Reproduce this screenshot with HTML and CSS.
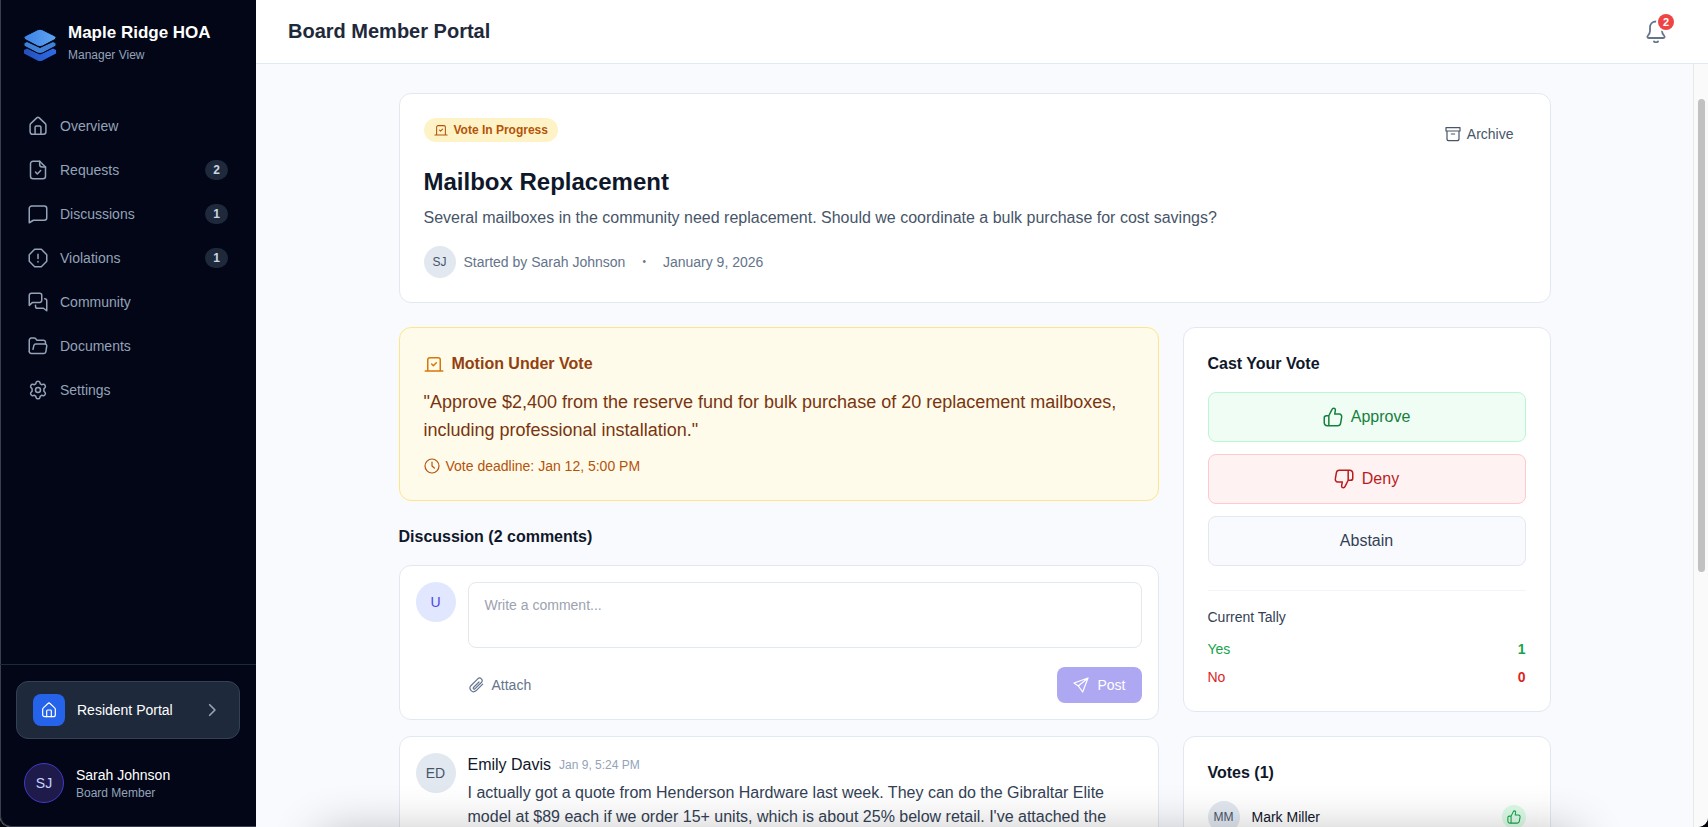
FILE: index.html
```
<!DOCTYPE html>
<html lang="en">
<head>
  <meta charset="UTF-8" />
  <meta name="viewport" content="width=device-width, initial-scale=1.0" />
  <title>Maple Ridge HOA - Board Member Portal</title>
  <link rel="stylesheet" href="styles.css">
</head>
<body>
  <!-- shared icons -->
  <svg class="sprite" aria-hidden="true">
    <symbol id="i-home" viewBox="0 0 24 24"><path d="M2.5 11a3 3 0 0 1 1-2.200L10.500 2.200a2.200 2.200 0 0 1 3 0L20.500 8.800a3 3 0 0 1 1 2.200V19a3 3 0 0 1-3 3h-13a3 3 0 0 1-3-3z"/><path d="M8.500 22v-8.500a1.500 1.500 0 0 1 1.500-1.500h4a1.500 1.500 0 0 1 1.500 1.500V22"/></symbol>
    <symbol id="i-request" viewBox="0 0 24 24"><path d="M14 1.500H6a3 3 0 0 0-3 3v15a3 3 0 0 0 3 3h12a3 3 0 0 0 3-3v-11z"/><path d="M14 1.500v4a3 3 0 0 0 3 3h4M9 14.500l2.200 2.200 4-4"/></symbol>
    <symbol id="i-chat" viewBox="0 0 24 24"><path d="M1.500 22.500V5.500a3 3 0 0 1 3-3h15a3 3 0 0 1 3 3v11a3 3 0 0 1-3 3h-13z"/></symbol>
    <symbol id="i-alert" viewBox="0 0 24 24"><path d="M8 1.500h8l6.500 6.500v8l-6.500 6.500h-8l-6.500-6.500v-8z"/><path d="M12 7.500v5M12 16.200v.5"/></symbol>
    <symbol id="i-community" viewBox="0 0 24 24"><path d="M1.500 16V4a2.500 2.500 0 0 1 2.500-2.500h10A2.500 2.500 0 0 1 16.500 4v6a2.500 2.500 0 0 1-2.500 2.500H5.500z"/><path d="M9 16v1a2.500 2.500 0 0 0 2.500 2.500h7l4 3V10.500A2.500 2.500 0 0 0 20 8"/></symbol>
    <symbol id="i-folder" viewBox="0 0 24 24"><path d="M1.500 18.500V5a2.500 2.500 0 0 1 2.500-2.500h3.500c.8 0 1.500.4 2 1l1 1.500h8A2.500 2.500 0 0 1 21 7.500V9"/><path d="M1.500 18.500A2.500 2.500 0 0 0 4 21h15a2.500 2.500 0 0 0 2.500-2.200l1-7A2.200 2.200 0 0 0 20.300 9.500H9.500A2.500 2.500 0 0 0 7 11.500l-1 4.500"/></symbol>
    <symbol id="i-gear" viewBox="0 0 24 24"><path d="M9.800 2.800c.5-1.700 3.900-1.700 4.400 0l.6 1.900 1.500.9 2-.5c1.700-.4 3.400 2.500 2.200 3.800L19.100 10.500v3l1.400 1.600c1.200 1.300-.5 4.200-2.200 3.800l-2-.5-1.500.9-.6 1.900c-.5 1.700-3.900 1.700-4.400 0l-.6-1.900-1.500-.9-2 .5c-1.700.4-3.400-2.500-2.200-3.800l1.400-1.600v-3L3.500 8.900C2.300 7.600 4 4.700 5.700 5.100l2 .5 1.500-.9z"/><circle cx="12" cy="12" r="3"/></symbol>
    <symbol id="i-bell" viewBox="0 0 24 24"><path d="M12 2.500c-3.500 0-6 2.500-6 6v3.500c0 2-.7 3-2 4.500-1.200 1.300-.6 2.500.7 2.500h14.600c1.300 0 1.900-1.200.7-2.500-1.300-1.500-2-2.500-2-4.500V8.500c0-3.500-2.500-6-6-6z"/><path d="M10 22.500c1 1 3 1 4 0"/></symbol>
    <symbol id="i-archive" viewBox="0 0 24 24"><path d="M1.500 2.500h21v5h-21zM3 7.500v11.500a3 3 0 0 0 3 3h12a3 3 0 0 0 3-3V7.500M9.500 12h5"/></symbol>
    <symbol id="i-ballot" viewBox="0 0 24 24"><path d="M1.500 20.500h21M4.500 20.500V7a2.500 2.500 0 0 1 2.500-2.500h10A2.500 2.500 0 0 1 19.500 7v13.500M9.200 12l2 2 3.600-3.600"/></symbol>
    <symbol id="i-clock" viewBox="0 0 24 24"><circle cx="12" cy="12" r="10.500"/><path d="M12 6v6l3.500 3"/></symbol>
    <symbol id="i-up" viewBox="0 0 24 24"><path d="M7 10.500L10.500 3.500c.5-1.100 1.200-2 2.300-2 1.600 0 2.300 1.300 2 2.800l-.8 4.200h5.500a3 3 0 0 1 2.900 3.600l-1.300 7.500a3.500 3.500 0 0 1-3.400 2.900H5a3.500 3.500 0 0 1-3.500-3.500v-6A2.500 2.500 0 0 1 4 10.500zM7 10.500v12"/></symbol>
    <symbol id="i-clip" viewBox="0 0 24 24"><path d="M16.500 7.500l-8.300 8.300a1.500 1.500 0 0 0 2.100 2.100l9.700-9.700a3.800 3.800 0 0 0-5.400-5.400L4.300 13.100a5.400 5.400 0 0 0 7.600 7.600L22 10.600"/></symbol>
    <symbol id="i-send" viewBox="0 0 24 24"><path d="M22.500 1.500L1.500 9l6.500 4.500L14.500 22.500zM22.500 1.500L8 13.500"/></symbol>
    <symbol id="i-next" viewBox="0 0 24 24"><path d="M8 3l9 9-9 9"/></symbol>
  </svg>

  <div class="app">
    <aside class="sidebar">
      <div class="brand">
        <svg class="brand-logo" viewBox="0 0 32 32" aria-hidden="true">
          <defs>
            <linearGradient id="lg-top" x1="0" y1="0" x2="1" y2="0">
              <stop offset="0" stop-color="#3b82e6"/><stop offset="1" stop-color="#60a5f0"/>
            </linearGradient>
            <linearGradient id="lg-low" x1="0" y1="0" x2="1" y2="0">
              <stop offset="0" stop-color="#2450b8"/><stop offset="1" stop-color="#2f6bea"/>
            </linearGradient>
          </defs>
          <path d="M0 21l3-1.500 13 6 13-6 3 1.500v3.500L18.500 31.500q-2.500 1-5 0L0 24.500z" fill="url(#lg-low)"/>
          <path d="M0 14l3-1.500 13 6 13-6 3 1.500v3l-13.500 7q-2.500 1-5 0L0 17z" fill="#4080d6" stroke="#020617" stroke-width="1"/>
          <path d="M13.500.8q2.500-1.300 5 0L31 7q2 1.500 0 3.500L18.500 17q-2.500 1.200-5 0L1 10.500Q-1 8.500 1 7z" fill="url(#lg-top)" stroke="#020617" stroke-width="1"/>
        </svg>
        <div class="brand-text">
          <div class="brand-name">Maple Ridge HOA</div>
          <div class="brand-sub">Manager View</div>
        </div>
      </div>

      <nav class="nav">
        <a href="#"><svg class="icon"><use href="#i-home"/></svg>Overview</a>
        <a href="#"><svg class="icon"><use href="#i-request"/></svg>Requests<span class="count">2</span></a>
        <a href="#"><svg class="icon"><use href="#i-chat"/></svg>Discussions<span class="count">1</span></a>
        <a href="#"><svg class="icon"><use href="#i-alert"/></svg>Violations<span class="count">1</span></a>
        <a href="#"><svg class="icon"><use href="#i-community"/></svg>Community</a>
        <a href="#"><svg class="icon"><use href="#i-folder"/></svg>Documents</a>
        <a href="#"><svg class="icon"><use href="#i-gear"/></svg>Settings</a>
      </nav>

      <div class="sidebar-footer">
        <a class="portal-link" href="#">
          <span class="portal-icon"><svg class="icon icon-sm"><use href="#i-home"/></svg></span>
          Resident Portal
          <svg class="icon icon-xs portal-next"><use href="#i-next"/></svg>
        </a>
        <div class="user">
          <span class="avatar avatar-user">SJ</span>
          <div>
            <div class="user-name">Sarah Johnson</div>
            <div class="user-role">Board Member</div>
          </div>
        </div>
      </div>
    </aside>

    <div class="page">
      <header class="topbar">
        <h1>Board Member Portal</h1>
        <button class="bell" type="button" aria-label="Notifications">
          <svg class="icon icon-lg"><use href="#i-bell"/></svg>
          <span class="bell-count">2</span>
        </button>
      </header>

      <div class="body">
        <main class="content">
          <div class="container">
            <section class="card summary">
              <div class="summary-top">
                <span class="status"><svg class="icon icon-xs"><use href="#i-ballot"/></svg>Vote In Progress</span>
                <button class="archive" type="button"><svg class="icon icon-sm"><use href="#i-archive"/></svg>Archive</button>
              </div>
              <h2>Mailbox Replacement</h2>
              <p class="lead">Several mailboxes in the community need replacement. Should we coordinate a bulk purchase for cost savings?</p>
              <div class="meta">
                <span class="avatar avatar-sm">SJ</span>
                <span>Started by Sarah Johnson</span>
                <span class="dot">•</span>
                <span>January 9, 2026</span>
              </div>
            </section>

            <div class="columns">
              <div class="col">
                <section class="card motion">
                  <h3><svg class="icon"><use href="#i-ballot"/></svg>Motion Under Vote</h3>
                  <p class="motion-text">"Approve $2,400 from the reserve fund for bulk purchase of 20 replacement mailboxes, including professional installation."</p>
                  <p class="deadline"><svg class="icon icon-sm"><use href="#i-clock"/></svg>Vote deadline: Jan 12, 5:00 PM</p>
                </section>

                <section class="discussion">
                  <h3>Discussion (2 comments)</h3>
                  <form class="card comment">
                    <span class="avatar avatar-me">U</span>
                    <div class="comment-body">
                      <textarea id="comment" aria-label="Comment" placeholder="Write a comment..."></textarea>
                      <div class="comment-actions">
                        <button class="attach" type="button"><svg class="icon icon-sm"><use href="#i-clip"/></svg>Attach</button>
                        <button class="post" type="submit" disabled><svg class="icon icon-sm"><use href="#i-send"/></svg>Post</button>
                      </div>
                    </div>
                  </form>

                  <article class="card comment">
                    <span class="avatar">ED</span>
                    <div class="comment-body">
                      <div class="comment-head"><span class="author">Emily Davis</span><time>Jan 9, 5:24 PM</time></div>
                      <p>I actually got a quote from Henderson Hardware last week. They can do the Gibraltar Elite model at $89 each if we order 15+ units, which is about 25% below retail. I've attached the</p>
                    </div>
                  </article>
                </section>
              </div>

              <div class="col">
                <section class="card">
                  <h3>Cast Your Vote</h3>
                  <div class="vote-buttons">
                    <button class="vote approve" type="button"><svg class="icon"><use href="#i-up"/></svg>Approve</button>
                    <button class="vote deny" type="button"><svg class="icon flip"><use href="#i-up"/></svg>Deny</button>
                    <button class="vote abstain" type="button">Abstain</button>
                  </div>
                  <div class="tally">
                    <div class="tally-title">Current Tally</div>
                    <div class="tally-row yes"><span>Yes</span><b>1</b></div>
                    <div class="tally-row no"><span>No</span><b>0</b></div>
                  </div>
                </section>

                <section class="card">
                  <h3>Votes (1)</h3>
                  <div class="voter">
                    <span class="avatar avatar-sm">MM</span>
                    <span>Mark Miller</span>
                    <span class="voter-mark"><svg class="icon icon-xs"><use href="#i-up"/></svg></span>
                  </div>
                </section>
              </div>
            </div>
          </div>
        </main>
        <div class="scrollbar"><div class="scrollbar-thumb"></div></div>
      </div>
    </div>
  </div>
  <div class="bottom-shade"></div>
</body>
</html>
```
FILE: styles.css
```
* {
  box-sizing: border-box;
}
html {
  background: #05070d;
}
body {
  margin: 0;
  font-family: "Liberation Sans", Arial, sans-serif;
  font-size: 14px;
  line-height: 20px;
  color: #0f172a;
}
h1, h2, h3, p {
  margin: 0;
}
button {
  font: inherit;
  border: 0;
  background: none;
  padding: 0;
  cursor: pointer;
}
a {
  color: inherit;
  text-decoration: none;
}
.sprite {
  display: none;
}
.icon {
  width: 20px;
  height: 20px;
  flex: none;
  fill: none;
  stroke: currentColor;
  stroke-width: 1.8;
  stroke-linecap: round;
  stroke-linejoin: round;
}
.icon-lg {
  width: 24px;
  height: 24px;
}
.icon-sm {
  width: 16px;
  height: 16px;
}
.icon-xs {
  width: 14px;
  height: 14px;
}

.app {
  display: flex;
  height: 100vh;
  overflow: hidden;
  background: #f9fafe;
  border-radius: 0 0 10px 10px;
}

/* sidebar */
.sidebar {
  width: 256px;
  flex: none;
  display: flex;
  flex-direction: column;
  background: #020617;
  color: #94a3b8;
  box-shadow: inset 1px -1px 0 #3a3f4b;
  border-bottom-left-radius: 10px;
}
.brand {
  display: flex;
  align-items: center;
  gap: 12px;
  height: 90px;
  padding: 0 24px;
}
.brand-logo {
  width: 32px;
  height: 32px;
}
.brand-text {
  padding-bottom: 4px;
}
.brand-name {
  font-size: 17px;
  font-weight: bold;
  color: #fff;
}
.brand-sub {
  margin-top: 4px;
  font-size: 12px;
  line-height: 16px;
}
.nav {
  flex: 1;
  display: flex;
  flex-direction: column;
  gap: 4px;
  padding: 16px;
}
.nav a {
  display: flex;
  align-items: center;
  gap: 12px;
  height: 40px;
  padding: 0 12px;
}
.count {
  margin-left: auto;
  padding: 2px 8px;
  border-radius: 10px;
  background: #1e293b;
  color: #cbd5e1;
  font-size: 12px;
  line-height: 16px;
  font-weight: bold;
}
.sidebar-footer {
  display: flex;
  flex-direction: column;
  gap: 16px;
  padding: 16px;
  border-top: 1px solid #1e293b;
}
.portal-link {
  display: flex;
  align-items: center;
  gap: 12px;
  padding: 12px 16px;
  border: 1px solid #334155;
  border-radius: 12px;
  background: #1e293b;
  color: #fff;
}
.portal-icon {
  display: flex;
  align-items: center;
  justify-content: center;
  width: 32px;
  height: 32px;
  border-radius: 8px;
  background: #2563eb;
}
.portal-next {
  margin-left: auto;
  margin-right: 4px;
  color: #94a3b8;
  stroke-width: 3;
}
.user {
  display: flex;
  align-items: center;
  gap: 12px;
  padding: 8px;
}
.user-name {
  color: #fff;
}
.user-role {
  font-size: 12px;
  line-height: 16px;
}
.avatar {
  display: flex;
  align-items: center;
  justify-content: center;
  width: 40px;
  height: 40px;
  flex: none;
  border-radius: 50%;
  background: #e2e8f0;
  color: #475569;
}
.avatar-sm {
  width: 32px;
  height: 32px;
  font-size: 12px;
}
.avatar-user {
  border: 1px solid #4338ca;
  background: #1e1b4b;
  color: #c7d2fe;
}
.avatar-me {
  background: #e0e7ff;
  color: #4f46e5;
}

/* top bar */
.page {
  flex: 1;
  min-width: 0;
  display: flex;
  flex-direction: column;
}
.topbar {
  display: flex;
  align-items: center;
  justify-content: space-between;
  height: 64px;
  flex: none;
  padding: 0 32px 1px;
  background: #fff;
  border-bottom: 1px solid #e2e8f0;
}
.topbar h1 {
  font-size: 20px;
  line-height: 28px;
  color: #1e293b;
}
.bell {
  position: relative;
  display: flex;
  padding: 8px;
  color: #64748b;
}
.bell-count {
  position: absolute;
  top: 3px;
  right: 2px;
  width: 16px;
  height: 16px;
  border-radius: 50%;
  background: #ef4444;
  color: #fff;
  font-size: 11px;
  line-height: 16px;
  font-weight: bold;
  text-align: center;
  box-shadow: 0 0 0 2px #fff;
}

/* content */
.body {
  flex: 1;
  min-height: 0;
  display: flex;
}
.content {
  flex: 1;
  min-width: 0;
  overflow-y: auto;
  scrollbar-width: none;
  padding: 29px 32px 32px;
}
.container {
  max-width: 1152px;
  margin: 0 auto;
}
.scrollbar {
  width: 15px;
  flex: none;
  padding: 35px 3px 0 4px;
  background: #fafafa;
  border-left: 1px solid #e8e8e8;
}
.scrollbar-thumb {
  height: 65%;
  border-radius: 4px;
  background: #c1c1c1;
}
.card {
  padding: 24px;
  border: 1px solid #e2e8f0;
  border-radius: 12px;
  background: #fff;
}
h3 {
  font-size: 16px;
  line-height: 24px;
}
.summary {
  margin-bottom: 24px;
}
.summary-top {
  display: flex;
  align-items: flex-start;
  justify-content: space-between;
  margin-bottom: 16px;
}
.status {
  display: flex;
  align-items: center;
  gap: 6px;
  padding: 4px 10px;
  border-radius: 12px;
  background: #fef3c7;
  color: #b45309;
  font-size: 12px;
  line-height: 16px;
  font-weight: bold;
}
.archive {
  display: flex;
  align-items: center;
  gap: 6px;
  padding: 6px 12px;
  color: #475569;
}
.summary h2 {
  font-size: 24px;
  line-height: 32px;
}
.lead {
  margin-top: 8px;
  font-size: 16px;
  line-height: 24px;
  color: #475569;
}
.meta {
  display: flex;
  align-items: center;
  gap: 8px;
  margin-top: 16px;
  color: #64748b;
}
.dot {
  margin: 0 9px;
  font-size: 10px;
}
.columns {
  display: grid;
  grid-template-columns: minmax(0, 760fr) minmax(0, 368fr);
  gap: 24px;
}
.col {
  display: flex;
  flex-direction: column;
  gap: 24px;
}

/* motion */
.motion {
  border-color: #fde68a;
  background: #fffbeb;
}
.motion h3 {
  display: flex;
  align-items: center;
  gap: 8px;
  color: #92400e;
}
.motion h3 .icon {
  color: #d97706;
}
.motion-text {
  margin: 12px 0;
  font-size: 18px;
  line-height: 28px;
  color: #78350f;
}
.deadline {
  display: flex;
  align-items: center;
  gap: 6px;
  color: #b45309;
}

/* comments */
.discussion {
  display: flex;
  flex-direction: column;
  gap: 16px;
}
.comment {
  display: flex;
  gap: 12px;
  padding: 16px;
}
.comment-body {
  flex: 1;
  min-width: 0;
}
.comment textarea {
  display: block;
  width: 100%;
  height: 66px;
  padding: 12px 16px;
  border: 1px solid #e2e8f0;
  border-radius: 8px;
  background: #fff;
  font: inherit;
  resize: none;
}
.comment textarea::placeholder {
  color: #9ca3af;
}
.comment-actions {
  display: flex;
  align-items: center;
  justify-content: space-between;
  margin-top: 19px;
}
.attach {
  display: flex;
  align-items: center;
  gap: 8px;
  color: #64748b;
}
.post {
  display: flex;
  align-items: center;
  gap: 8px;
  padding: 8px 16px;
  border-radius: 8px;
  background: #aea8f2;
  color: #fff;
}
.comment-head {
  display: flex;
  align-items: center;
  gap: 8px;
  margin-bottom: 4px;
}
.author {
  font-size: 16px;
  line-height: 24px;
}
.comment-head time {
  font-size: 12px;
  color: #94a3b8;
}
.comment-body p {
  font-size: 16px;
  line-height: 24px;
  color: #334155;
}

/* voting */
.vote-buttons {
  display: flex;
  flex-direction: column;
  gap: 12px;
  margin-top: 16px;
}
.vote {
  display: flex;
  align-items: center;
  justify-content: center;
  gap: 8px;
  padding: 12px;
  border: 1px solid #e2e8f0;
  border-radius: 8px;
  font-size: 16px;
  line-height: 24px;
}
.approve {
  border-color: #bbf7d0;
  background: #f0fdf4;
  color: #15803d;
}
.deny {
  border-color: #fecaca;
  background: #fef2f2;
  color: #b91c1c;
}
.abstain {
  background: #f9fafe;
  color: #334155;
}
.flip {
  transform: rotate(180deg);
}
.tally {
  display: flex;
  flex-direction: column;
  gap: 8px;
  margin-top: 24px;
  padding-top: 16px;
  border-top: 1px solid #f1f5f9;
}
.tally-title {
  margin-bottom: 4px;
  color: #334155;
}
.tally-row {
  display: flex;
  justify-content: space-between;
}
.yes {
  color: #16a34a;
}
.no {
  color: #dc2626;
}
.voter {
  display: flex;
  align-items: center;
  gap: 12px;
  margin-top: 16px;
}
.voter-mark {
  display: flex;
  align-items: center;
  justify-content: center;
  width: 24px;
  height: 24px;
  margin-left: auto;
  border-radius: 50%;
  background: #dcfce7;
  color: #16a34a;
}

/* soft shade along the bottom edge */
.bottom-shade {
  position: fixed;
  left: 320px;
  right: 130px;
  bottom: -40px;
  height: 40px;
  box-shadow: 0 8px 48px rgba(0, 0, 0, 0.3);
  pointer-events: none;
}
```
